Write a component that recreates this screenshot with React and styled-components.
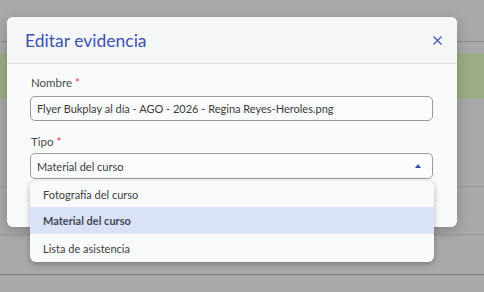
import React from 'react';
import styled, { createGlobalStyle } from 'styled-components';

const GlobalStyle = createGlobalStyle`
  html, body {
    margin: 0;
    padding: 0;
    background: #a9a9ab;
    font-family: Lato, "Open Sans", sans-serif;
  }
`;

// Page behind the backdrop
const Screen = styled.div`
  position: relative;
  width: 484px;
  height: 292px;
  overflow: hidden;
  background: #a9a9ab;
`;

const Backdrop = styled.div`
  display: flex;
  flex-direction: column;
`;

const Band = styled.div`
  height: ${p => p.h}px;
  background: ${p => p.bg || '#a9a9ab'};
  border-bottom: ${p => (p.line ? `1px solid ${p.line}` : 'none')};
`;

// Modal
const Modal = styled.div`
  position: absolute;
  left: 7px;
  top: 17px;
  width: 450px;
  height: 210px;
  border-radius: 6px;
  background: #f9fafc;
  box-shadow: 0 4px 14px rgba(0, 0, 0, 0.22);
  overflow: hidden;
`;

const Header = styled.div`
  height: 47px;
  box-sizing: border-box;
  display: flex;
  align-items: center;
  justify-content: space-between;
  padding: 0 14px 0 18px;
  background: #f5f6f8;
  border-bottom: 1px solid #dfe1e5;
`;

const Title = styled.h2`
  margin: 0;
  font-size: 17.5px;
  font-weight: 400;
  color: #3b52b2;
`;

const CloseButton = styled.button`
  border: none;
  background: none;
  padding: 0;
  width: 12px;
  height: 12px;
  display: flex;
  align-items: center;
  justify-content: center;
  cursor: pointer;
`;

const Body = styled.div`
  padding: 12px 24px 0 23px;
  display: flex;
  flex-direction: column;
`;

const Field = styled.div`
  display: flex;
  flex-direction: column;
  margin-bottom: ${p => p.mb || 0}px;
`;

const Label = styled.label`
  font-size: 11.5px;
  color: #4a4a4a;
  line-height: 14px;
  margin: 0 0 ${p => p.gap}px 1px;
`;

const Required = styled.span`
  color: #e0393e;
  margin-left: 3px;
`;

const Input = styled.div`
  height: ${p => p.h}px;
  box-sizing: border-box;
  border: 1px solid #9b9b9b;
  border-radius: 5px;
  background: #fafbfc;
  padding: 0 11px 0 6px;
  display: flex;
  align-items: center;
  justify-content: space-between;
  font-size: 11px;
  color: #3a3a3a;
`;

const Caret = styled.span`
  width: 0;
  height: 0;
  border-left: 3px solid transparent;
  border-right: 3px solid transparent;
  border-bottom: 4px solid #3a4c9c;
`;

// Dropdown list
const Menu = styled.ul`
  position: absolute;
  left: 30px;
  top: 181px;
  width: 404px;
  margin: 0;
  padding: 0;
  list-style: none;
  background: #f9fafc;
  border-radius: 6px;
  box-shadow: 0 2px 6px rgba(0, 0, 0, 0.28);
  overflow: hidden;
`;

const Option = styled.li`
  height: ${p => p.h}px;
  display: flex;
  align-items: center;
  padding-left: 13px;
  font-size: 11px;
  color: ${p => (p.active ? '#464852' : '#3d3d3d')};
  font-weight: ${p => (p.active ? 700 : 400)};
  background: ${p => (p.active ? '#dbe3f8' : 'transparent')};
`;

const options = [
  { label: 'Fotografía del curso', h: 26 },
  { label: 'Material del curso', h: 27, active: true },
  { label: 'Lista de asistencia', h: 28 },
];

const App = () => (
  <Screen>
    <GlobalStyle />
    <Backdrop>
      <Band h={41} line="#8b8b8d" />
      <Band h={11} />
      <Band h={46} bg="#9cac86" />
      <Band h={87} line="#9a9a9c" />
      <Band h={47} line="#9a9a9c" />
      <Band h={39} line="#7f7f81" />
    </Backdrop>

    <Modal>
      <Header>
        <Title>Editar evidencia</Title>
        <CloseButton aria-label="Cerrar">
          <svg width="9" height="9" viewBox="0 0 9 9">
            <path d="M0.5 0.5 L8.5 8.5 M8.5 0.5 L0.5 8.5" stroke="#3b52b2" strokeWidth="1.1" fill="none" />
          </svg>
        </CloseButton>
      </Header>
      <Body>
        <Field mb={14}>
          <Label gap={6}>
            Nombre<Required>*</Required>
          </Label>
          <Input h={25}>Flyer Bukplay al día - AGO - 2026 - Regina Reyes-Heroles.png</Input>
        </Field>
        <Field>
          <Label gap={4}>
            Tipo<Required>*</Required>
          </Label>
          <Input h={26}>
            Material del curso
            <Caret />
          </Input>
        </Field>
      </Body>
    </Modal>

    <Menu>
      {options.map(o => (
        <Option key={o.label} h={o.h} active={o.active}>
          {o.label}
        </Option>
      ))}
    </Menu>
  </Screen>
);

export default App;
